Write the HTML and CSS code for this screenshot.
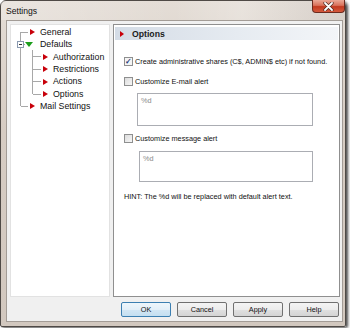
FILE: index.html
```html
<!DOCTYPE html>
<html lang="en">
<head>
    <meta charset="UTF-8">
    <title>Settings</title>
    <link rel="stylesheet" href="styles.css">
</head>
<body>
    <div class="window">
        <!-- Title bar -->
        <div class="titlebar">
            <span class="title">Settings</span>
            <button class="close" title="Close">
                <svg width="11" height="9" viewBox="0 0 11 9">
                    <path d="M2 1 L9 8 M9 1 L2 8" stroke="#4a2a22" stroke-width="3.2" stroke-linecap="round"/>
                    <path d="M2 1 L9 8 M9 1 L2 8" stroke="#fff" stroke-width="1.8" stroke-linecap="round"/>
                </svg>
            </button>
        </div>

        <div class="client">
            <div class="panes">
                <!-- Tree of settings pages -->
                <div class="tree">
                    <svg class="tree-lines" width="98" height="100">
                        <path d="M9.5 7 V81.4 M9.5 7 H17 M9.5 81.4 H17 M12.5 19.4 H14 M21.5 25 V69 M21.5 31.8 H30 M21.5 44.2 H30 M21.5 56.6 H30 M21.5 69 H30" stroke="#a8a8a8" fill="none"/>
                        <rect x="6.5" y="16.4" width="6" height="6" fill="#fff" stroke="#8a9ab0"/>
                        <path d="M8 19.4 H11" stroke="#303030"/>
                    </svg>
                    <ul class="tree-list">
                        <li class="node lvl1"><span class="arrow"></span>General</li>
                        <li class="node open"><span class="arrow-down"></span>Defaults</li>
                        <li class="node lvl2"><span class="arrow"></span>Authorization</li>
                        <li class="node lvl2"><span class="arrow"></span>Restrictions</li>
                        <li class="node lvl2"><span class="arrow"></span>Actions</li>
                        <li class="node lvl2"><span class="arrow"></span>Options</li>
                        <li class="node lvl1"><span class="arrow"></span>Mail Settings</li>
                    </ul>
                </div>

                <!-- Current page -->
                <div class="page">
                    <div class="page-head"><span class="arrow"></span>Options</div>
                    <div class="page-body">
                        <div class="check row1"><span class="box checked">&#10003;</span>Create administrative shares (C$, ADMIN$ etc) if not found.</div>
                        <div class="check row2"><span class="box"></span>Customize E-mail alert</div>
                        <div class="field field1">%d</div>
                        <div class="check row3"><span class="box"></span>Customize message alert</div>
                        <div class="field field2">%d</div>
                        <p class="hint">HINT: The %d will be replaced with default alert text.</p>
                    </div>
                </div>
            </div>

            <div class="buttons">
                <button class="btn default">OK</button>
                <button class="btn">Cancel</button>
                <button class="btn">Apply</button>
                <button class="btn">Help</button>
            </div>
        </div>
    </div>
</body>
</html>
```

FILE: styles.css
```css
/* Reset */
* {
    margin: 0;
    padding: 0;
    box-sizing: border-box;
}

body {
    width: 350px;
    height: 328px;
    overflow: hidden;
    background: #fff;
    font-family: 'Liberation Sans', Arial, sans-serif;
    color: #1a1a1a;
}

/* Window frame */
.window {
    width: 346px;
    height: 327px;
    background: linear-gradient(180deg, #e4ddd6 0%, #d6ccc3 40%, #d2c8bf 100%);
    border: 1px solid #4f4a46;
    border-radius: 6px 6px 2px 2px;
    box-shadow: 2px 1px 3px rgba(0, 0, 0, 0.7);
    display: flex;
    flex-direction: column;
}

.titlebar {
    height: 19px;
    display: flex;
    justify-content: space-between;
    align-items: flex-start;
    background: linear-gradient(90deg, rgba(255, 255, 255, 0.25) 0%, rgba(255, 255, 255, 0) 50%, rgba(255, 255, 255, 0.2) 70%, rgba(0, 0, 0, 0.05) 100%);
}

.title {
    font-size: 8.6px;
    padding: 5px 0 0 5px;
    color: #111;
}

.close {
    width: 33px;
    height: 13px;
    margin: -1px 0 0 0;
    border: 1px solid #6b2a1e;
    border-top: none;
    border-radius: 0 0 4px 4px;
    background: linear-gradient(180deg, #eaa997 0%, #d9715a 45%, #c23a1f 55%, #d5593c 100%);
    display: flex;
    justify-content: center;
    align-items: center;
}

/* Client area */
.client {
    flex: 1;
    margin: 0 2px 4px 5px;
    background: #f0f0f0;
    border: 1px solid #a39c96;
    padding: 3px 2px 4px 3px;
    display: flex;
    flex-direction: column;
}

.panes {
    height: 273px;
    display: flex;
    gap: 3px;
}

/* Tree */
.tree {
    width: 100px;
    background: #fff;
    border: 1px solid #e2e2e2;
    position: relative;
}

.tree-lines {
    position: absolute;
    top: 0;
    left: 0;
    shape-rendering: crispEdges;
}

.tree-list {
    list-style: none;
    padding-top: 0.8px;
    position: relative;
}

.node {
    height: 12.4px;
    line-height: 12.4px;
    font-size: 8.8px;
    display: flex;
    align-items: center;
    white-space: nowrap;
    color: #111;
}

.lvl1 {
    padding-left: 19px;
}

.lvl2 {
    padding-left: 32px;
}

.open {
    padding-left: 14px;
}

.arrow {
    width: 0;
    height: 0;
    border-left: 5px solid #c8000a;
    border-top: 3.5px solid transparent;
    border-bottom: 3.5px solid transparent;
    margin-right: 5px;
}

.arrow-down {
    width: 0;
    height: 0;
    border-top: 5px solid #1c9e1c;
    border-left: 4px solid transparent;
    border-right: 4px solid transparent;
    margin-right: 7px;
}

/* Page */
.page {
    flex: 1;
    background: #fff;
    border: 1px solid #8f8f8f;
    padding: 1px;
}

.page-head {
    height: 13px;
    margin-top: 1px;
    display: flex;
    align-items: center;
    padding-left: 5px;
    font-size: 8.7px;
    font-weight: 700;
    background: linear-gradient(90deg, #d4dce6 0%, #e6ebf1 55%, #f3f5f8 100%);
}

.page-head .arrow {
    border-left-width: 4px;
    margin-right: 8px;
}

.page-body {
    padding: 0 0 0 9px;
    font-size: 7.3px;
    color: #111;
}

.check {
    height: 12px;
    display: flex;
    align-items: center;
    white-space: nowrap;
}

.row1 {
    margin-top: 15px;
}

.row2 {
    margin-top: 8px;
}

.row3 {
    margin-top: 6.5px;
}

.box {
    width: 9px;
    height: 9px;
    border: 1px solid #8e8f8f;
    background: linear-gradient(135deg, #dcdcdc 0%, #f6f6f6 100%);
    margin-right: 2px;
    font-size: 8px;
    line-height: 7px;
    text-align: center;
    color: #1f3a7a;
    font-weight: 700;
}

.box.checked {
    background: #f4f4f4;
}

.field {
    border: 1px solid #abadb3;
    color: #8a8a8a;
    padding: 2px 3px;
    font-size: 7.3px;
}

.field1 {
    margin: 6px 0 0 13px;
    width: 176px;
    height: 33px;
}

.field2 {
    margin: 6.5px 0 0 15px;
    width: 174px;
    height: 31px;
}

.hint {
    margin-top: 9px;
    height: 12px;
    line-height: 12px;
}

/* Buttons */
.buttons {
    margin-top: 5px;
    height: 15px;
    display: flex;
    justify-content: flex-end;
    gap: 6px;
    padding-right: 1px;
}

.btn {
    width: 50px;
    height: 15px;
    font-family: 'Liberation Sans', Arial, sans-serif;
    font-size: 7.3px;
    color: #111;
    border: 1px solid #707070;
    border-radius: 2px;
    background: linear-gradient(180deg, #f4f4f4 0%, #ececec 50%, #e0e0e0 51%, #d4d4d4 100%);
}

.btn.default {
    border-color: #3c7fb1;
    background: linear-gradient(180deg, #eef6fb 0%, #e3eff8 50%, #d2e6f4 51%, #c4dff1 100%);
}
```
